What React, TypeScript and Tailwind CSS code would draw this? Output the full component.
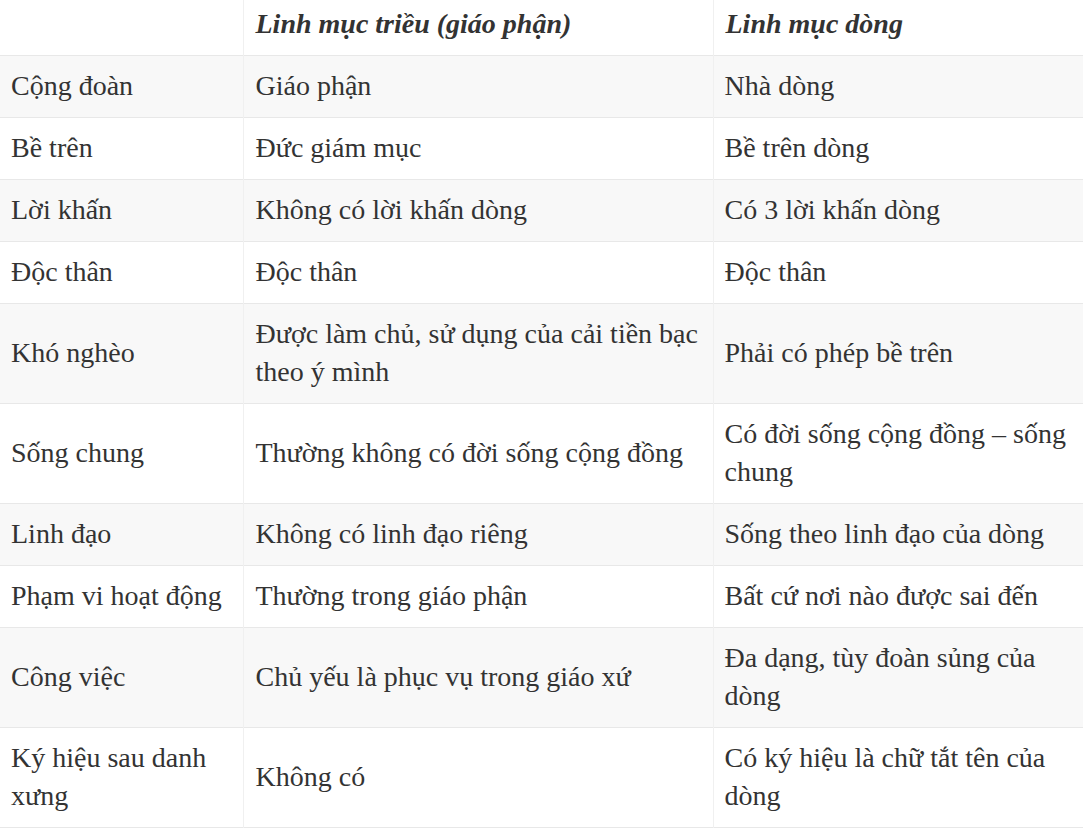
const rows: [string, string, string][] = [
  ['Cộng đoàn', 'Giáo phận', 'Nhà dòng'],
  ['Bề trên', 'Đức giám mục', 'Bề trên dòng'],
  ['Lời khấn', 'Không có lời khấn dòng', 'Có 3 lời khấn dòng'],
  ['Độc thân', 'Độc thân', 'Độc thân'],
  ['Khó nghèo', 'Được làm chủ, sử dụng của cải tiền bạc theo ý mình', 'Phải có phép bề trên'],
  ['Sống chung', 'Thường không có đời sống cộng đồng', 'Có đời sống cộng đồng – sống chung'],
  ['Linh đạo', 'Không có linh đạo riêng', 'Sống theo linh đạo của dòng'],
  ['Phạm vi hoạt động', 'Thường trong giáo phận', 'Bất cứ nơi nào được sai đến'],
  ['Công việc', 'Chủ yếu là phục vụ trong giáo xứ', 'Đa dạng, tùy đoàn sủng của dòng'],
  ['Ký hiệu sau danh xưng', 'Không có', 'Có ký hiệu là chữ tắt tên của dòng'],
]

export default function App() {
  return (
    <div className="w-[1083px] bg-white" style={{ fontFamily: '"Liberation Serif", "Times New Roman", serif' }}>
      <table className="w-[1083px] table-fixed border-collapse text-[28px] leading-[38px] text-[#333]">
        <colgroup>
          <col className="w-[243px]" />
          <col className="w-[470px]" />
          <col className="w-[370px]" />
        </colgroup>
        <thead>
          <tr className="bg-white border-b border-[#e8e8e8]">
            <th className="h-[55px] px-3 pt-[5px] pb-0 text-left align-top"></th>
            <th className="h-[55px] px-3 pt-[5px] pb-0 text-left align-top font-bold italic border-l border-[#f0f0f0]">Linh mục triều (giáo phận)</th>
            <th className="h-[55px] px-3 pt-[5px] pb-0 text-left align-top font-bold italic border-l border-r border-[#f0f0f0]">Linh mục dòng</th>
          </tr>
        </thead>
        <tbody>
          {rows.map((r, i) => (
            <tr key={i} className={`border-b border-[#e8e8e8] ${i % 2 === 0 ? 'bg-[#f8f8f8]' : 'bg-white'}`}>
              <td className="px-[11px] py-[11.5px] align-middle">{r[0]}</td>
              <td className="px-3 py-[11.5px] align-middle border-l border-[#f0f0f0]">{r[1]}</td>
              <td className="px-[11px] py-[11.5px] align-middle border-l border-r border-[#f0f0f0]">{r[2]}</td>
            </tr>
          ))}
        </tbody>
      </table>
    </div>
  )
}
